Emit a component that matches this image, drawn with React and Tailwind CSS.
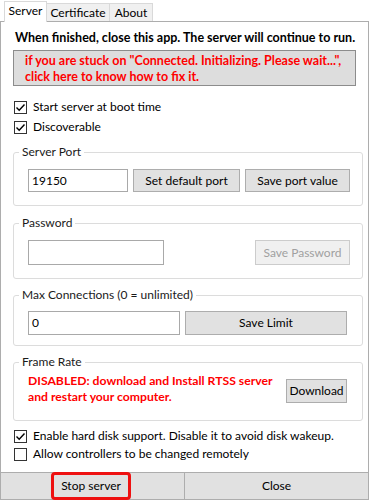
import React from "react";

const font = { fontFamily: 'Lato, "Noto Sans", sans-serif' };

function CheckBox({ checked, label }) {
  return (
    <div className="flex items-center h-[18px] ml-[13px]">
      <span className="w-[13px] h-[13px] border border-[#333333] bg-white flex items-center justify-center">
        {checked && (
          <svg width="11" height="11" viewBox="0 0 11 11">
            <path d="M1.5 5.5 L4.2 8.2 L9.5 2.5" fill="none" stroke="#000" strokeWidth="1.4" />
          </svg>
        )}
      </span>
      <span className="ml-[6px] text-[12px] leading-[16px] text-black">{label}</span>
    </div>
  );
}

function Group({ title, className, children }) {
  return (
    <fieldset className="ml-[12px] w-[350px] border border-[#dcdcdc] rounded-[3px]">
      <legend className="ml-[5px] px-[3px] text-[12px] leading-[16px] text-[#1a1a1a]">{title}</legend>
      <div className={className}>{children}</div>
    </fieldset>
  );
}

function Btn({ children, className, disabled }) {
  return (
    <button
      className={`border text-[12px] leading-[16px] flex items-center justify-center ${
        disabled
          ? "bg-[#f0f0f0] border-[#cccccc] text-[#a0a0a0]"
          : "bg-[#e1e1e1] border-[#adadad] text-black"
      } ${className}`}
    >
      {children}
    </button>
  );
}

export default function App() {
  return (
    <div className="w-[369px] h-[500px] bg-white overflow-hidden flex flex-col" style={font}>
      {/* Tabs */}
      <div className="h-[21px] flex items-end pl-[4px] shrink-0">
        <div className="w-[43px] h-[21px] border border-b-0 border-[#d9d9d9] bg-white text-[12px] leading-[18px] text-center text-black relative top-[1px] z-10">
          Server
        </div>
        <div className="w-[63px] h-[18px] border border-b-0 border-l-0 border-[#d9d9d9] bg-[#f0f0f0] text-[12px] leading-[17px] text-center text-black">
          Certificate
        </div>
        <div className="w-[43px] h-[18px] border border-b-0 border-l-0 border-[#d9d9d9] bg-[#f0f0f0] text-[12px] leading-[17px] text-center text-black">
          About
        </div>
      </div>

      {/* Panel */}
      <div className="h-[451px] border border-b-0 border-[#adadad] bg-white shrink-0 flex flex-col">
        <div className="mt-[8px] pl-[14px] text-[12.5px] leading-[16px] font-bold text-black whitespace-nowrap">
          When finished, close this app. The server will continue to run.
        </div>

        <div className="mt-[4px] ml-[12px] w-[343px] h-[36px] bg-[#dddddd] border border-[#8c8c8c] pt-[2px] pl-[11px] text-[12.5px] leading-[16px] font-bold text-[#ff0000] whitespace-nowrap">
          <div>if you are stuck on "Connected. Initializing. Please wait...",</div>
          <div>click here to know how to fix it.</div>
        </div>

        <div className="mt-[12px] flex flex-col gap-[2px]">
          <CheckBox checked label="Start server at boot time" />
          <CheckBox checked label="Discoverable" />
        </div>

        <div className="h-[8px] shrink-0" />
        <Group title="Server Port" className="pt-[9px] pb-[13px] pl-[14px]">
          <div className="flex gap-[5px]">
            <div className="w-[100px] h-[23px] border border-[#a9a9a9] bg-white text-[12px] leading-[21px] pl-[3px] text-black">
              19150
            </div>
            <Btn className="w-[107px] h-[23px]">Set default port</Btn>
            <Btn className="w-[105px] h-[23px]">Save port value</Btn>
          </div>
        </Group>

        <div className="h-[9px] shrink-0" />
        <Group title="Password" className="pt-[9px] pb-[13px] pl-[14px] pr-[12px]">
          <div className="flex justify-between">
            <div className="w-[136px] h-[25px] border border-[#a9a9a9] bg-white" />
            <Btn disabled className="w-[95px] h-[25px]">Save Password</Btn>
          </div>
        </Group>

        <div className="h-[8px] shrink-0" />
        <Group title="Max Connections (0 = unlimited)" className="pt-[8px] pb-[10px] pl-[14px]">
          <div className="flex gap-[5px]">
            <div className="w-[152px] h-[24px] border border-[#a9a9a9] bg-white text-[12px] leading-[22px] pl-[3px] text-black">
              0
            </div>
            <Btn className="w-[162px] h-[24px]">Save Limit</Btn>
          </div>
        </Group>

        <div className="h-[8px] shrink-0" />
        <Group title="Frame Rate" className="pt-[3px] pb-[15px] pl-[14px]">
          <div className="flex items-start">
            <div className="w-[258px] text-[12.2px] leading-[16px] font-bold text-[#ff0000] whitespace-nowrap">
              <div>DISABLED: download and Install RTSS server</div>
              <div>and restart your computer.</div>
            </div>
            <Btn className="w-[61px] h-[24px] mt-[6px]">Download</Btn>
          </div>
        </Group>

        <div className="mt-[6px] flex flex-col">
          <CheckBox checked label="Enable hard disk support. Disable it to avoid disk wakeup." />
          <CheckBox label="Allow controllers to be changed remotely" />
        </div>
      </div>

      {/* Bottom buttons */}
      <div className="flex h-[28px] shrink-0">
        <button className="w-[185px] h-[28px] bg-[#e1e1e1] border border-[#adadad] flex items-center justify-center">
          <span className="h-[28px] px-[7px] mr-[3px] border-[3px] border-[#ee1111] rounded-[4px] text-[12px] leading-[22px] text-black">
            Stop server
          </span>
        </button>
        <button className="w-[184px] h-[28px] bg-[#e1e1e1] border border-l-0 border-[#adadad] text-[12px] text-black">
          Close
        </button>
      </div>
    </div>
  );
}
